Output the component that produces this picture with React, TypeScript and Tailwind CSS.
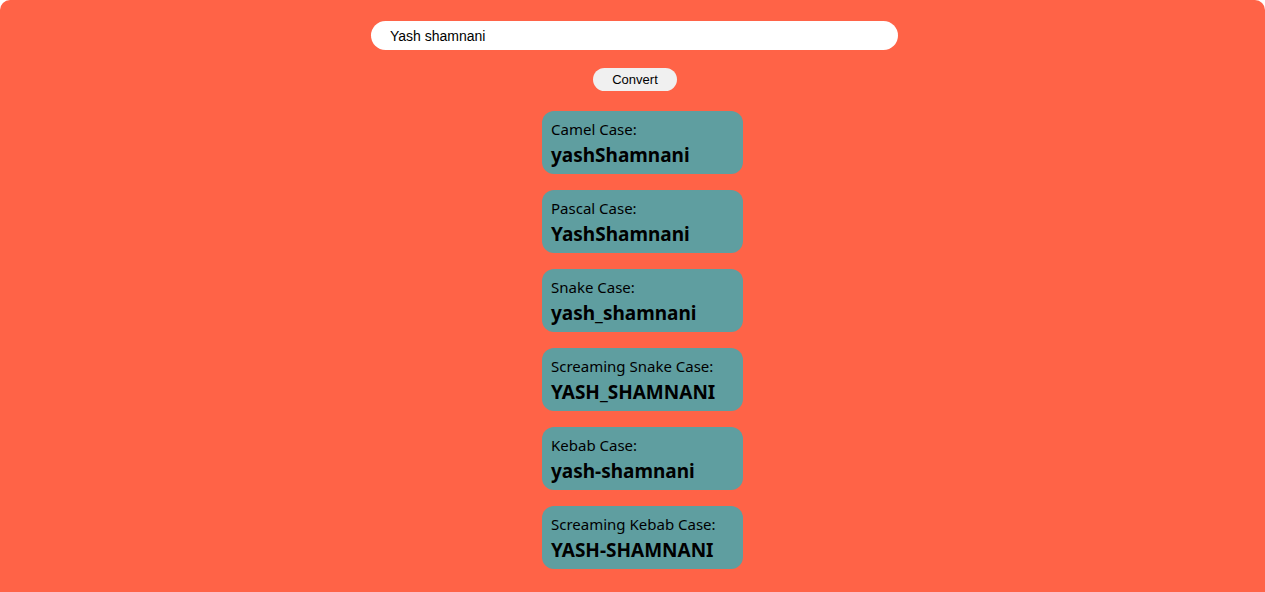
const cases = [
  { label: 'Camel Case:', value: 'yashShamnani' },
  { label: 'Pascal Case:', value: 'YashShamnani' },
  { label: 'Snake Case:', value: 'yash_shamnani' },
  { label: 'Screaming Snake Case:', value: 'YASH_SHAMNANI' },
  { label: 'Kebab Case:', value: 'yash-shamnani' },
  { label: 'Screaming Kebab Case:', value: 'YASH-SHAMNANI' }
];

export default function App() {
  return (
    <div className="min-h-[592px] bg-white">
      <div className="flex min-h-[592px] flex-col items-center rounded-t-[10px] bg-[#ff6347] pb-6 pt-[21px]">
        <div className="flex w-full justify-center pl-[4px]">
          <input
            defaultValue="Yash shamnani"
            className="h-[29px] w-[527px] rounded-full border-0 bg-white pl-[19px] font-['Liberation_Sans',Arial,sans-serif] text-[14px] text-black outline-none"
          />
        </div>
        <div className="mt-[18px] flex w-full justify-center pl-[5px]">
          <button className="h-[23px] w-[84px] rounded-full bg-[#f0f0f0] font-['Liberation_Sans',Arial,sans-serif] text-[13px] text-black">
            Convert
          </button>
        </div>
        <ul className="mt-[20px] flex w-full flex-col items-center gap-[16px] pl-[20px]">
          {cases.map((c) => (
            <li
              key={c.label}
              className="flex h-[63px] w-[201px] flex-col rounded-[12px] bg-[#5f9ea0] px-[9px] pt-[7px] font-['Noto_Sans',sans-serif] text-black"
            >
              <span className="text-[15px] leading-[22px]">{c.label}</span>
              <span className="mt-[3px] text-[19px] font-bold leading-[24px]">{c.value}</span>
            </li>
          ))}
        </ul>
      </div>
    </div>
  );
}
